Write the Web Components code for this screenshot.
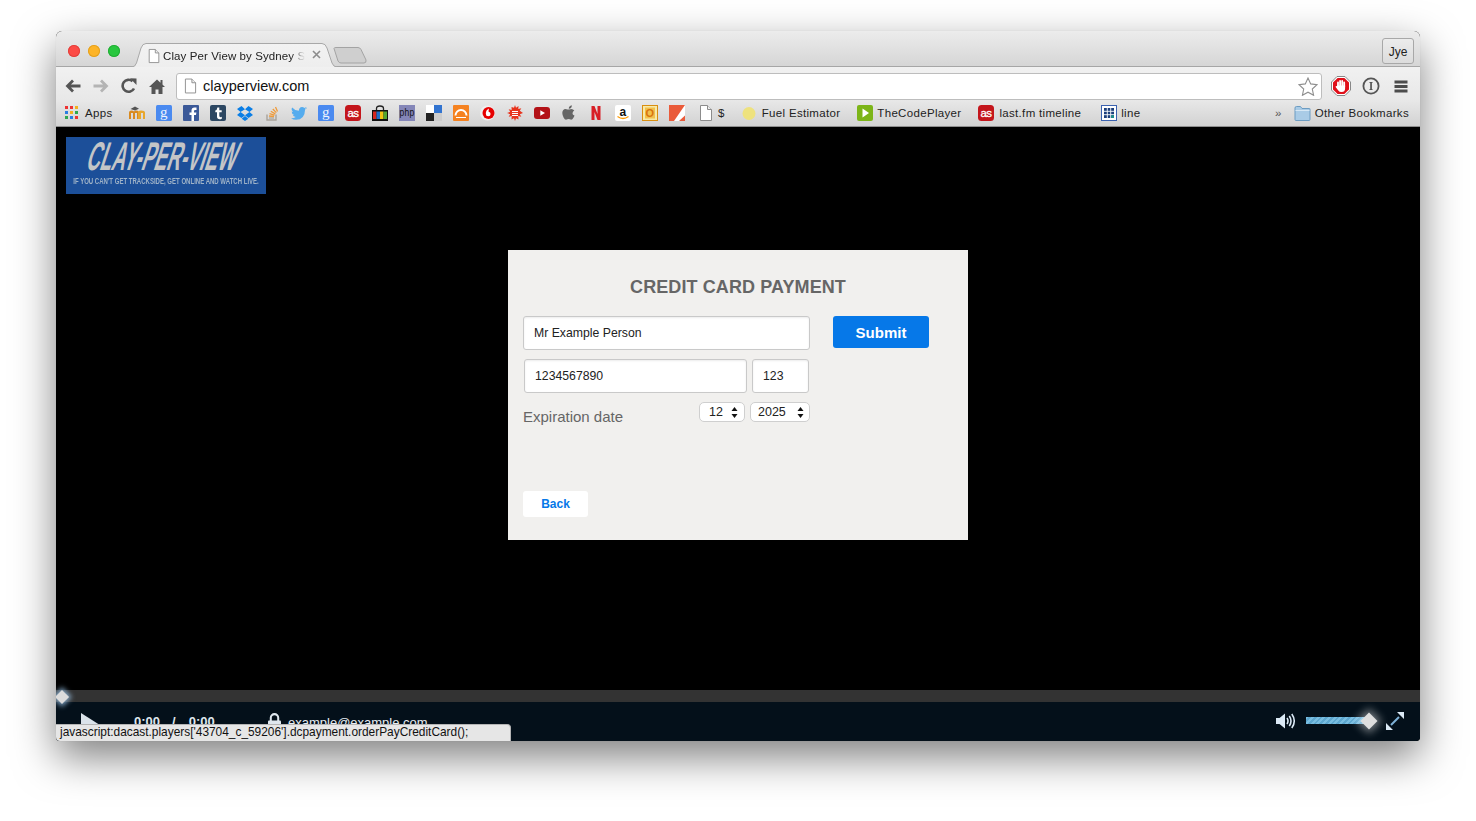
<!DOCTYPE html>
<html>
<head>
<meta charset="utf-8">
<title>Clay Per View</title>
<style>
  html, body { margin: 0; background: #fff; }
  body { width: 1476px; height: 821px; overflow: hidden; font-family: "Liberation Sans", Arial, sans-serif; }
</style>
</head>
<body>
<browser-window>
  <tab-strip></tab-strip>
  <browser-toolbar></browser-toolbar>
  <bookmarks-bar></bookmarks-bar>
  <player-stage>
    <site-logo></site-logo>
    <payment-card></payment-card>
  </player-stage>
  <player-bar></player-bar>
  <status-bubble>javascript:dacast.players['43704_c_59206'].dcpayment.orderPayCreditCard();</status-bubble>
</browser-window>

<script>
const PAGE_ICON = `<path d="M2.5 .5h7l4 4v11h-11z" fill="#fff" stroke="#8c8c8c"/><path d="M9.5 .5v4h4" fill="#eee" stroke="#8c8c8c"/>`;

// every 16x16 favicon of the bookmarks bar
const ICONS = {
  apps: `<rect x="0" y="1" width="3" height="3" fill="#e33"/><rect x="5" y="1" width="3" height="3" fill="#e33"/><rect x="10" y="1" width="3" height="3" fill="#f2b01e"/><rect x="0" y="6" width="3" height="3" fill="#2a7de1"/><rect x="5" y="6" width="3" height="3" fill="#f2b01e"/><rect x="10" y="6" width="3" height="3" fill="#2fa84f"/><rect x="0" y="11" width="3" height="3" fill="#2fa84f"/><rect x="5" y="11" width="3" height="3" fill="#2a7de1"/><rect x="10" y="11" width="3" height="3" fill="#e33"/>`,
  moodle: `<path d="M0 14V7.500Q0 5.500 2.500 5.500 4.200 5.500 5 6.500 5.800 5.500 7.500 5.500 10 5.500 10 7.500V14H8V8H6V14H4V8H2V14z" fill="#d98a1f"/><path d="M9 14V7.500Q9 5.500 12 5.500 16 5.500 16 7.500V14H14V8H12V14z" fill="#e8a72d"/><path d="M1.500 4L6 1.500 10 3.800 6 5.500z" fill="#555"/>`,
  g: `<rect width="16" height="16" rx="1.500" fill="#4a8af0"/><text x="8" y="11.500" text-anchor="middle" font-family="Liberation Serif,serif" font-size="15" fill="#fff" fill-opacity=".92">g</text>`,
  fb: `<rect width="16" height="16" rx="1" fill="#3b5998"/><path d="M11 16v-6h2l.4-2.500H11V6q0-1 1.200-1h1.300V2.600Q12.500 2.400 11.600 2.400 8.500 2.400 8.500 5.500v2H6.500V10h2v6z" fill="#fff"/>`,
  tumblr: `<rect width="16" height="16" rx="2" fill="#2c4762"/><path d="M9.300 2.500v2.700h2.400v2H9.300v3.600q0 1.400 1.200 1.400.7 0 1.300-.4v2q-.9.500-2.200.5-2.600 0-2.600-2.800V7.200H5.300V5.600Q7.100 5 7.400 2.500z" fill="#fff"/>`,
  dropbox: `<path d="M4.500 1L0 4l3.500 3L8 4.200zM11.500 1L16 4l-3.500 3L8 4.200zM0 10l4.500 3L8 10.200 3.500 7zM16 10l-4.500 3L8 10.200 12.500 7zM4.700 13.800L8 11l3.300 2.800L8 16z" fill="#0a7ee6"/>`,
  so: `<path d="M3 9.500V15h9V9.500" fill="none" stroke="#a9a39a" stroke-width="1.400"/><path d="M5 13h5" stroke="#b5aea3" stroke-width="1.300"/><path d="M5 11l5 .5M5.500 8.700l5 1.400M6.800 6.300l4.500 2.600M8.800 4l3.500 3.600M11.500 2l2 4.600" stroke="#ef9b3b" stroke-width="1.300"/>`,
  twitter: `<path d="M16 3.400q-.9.400-1.900.5 1-.6 1.400-1.800-.9.600-2.100.8-.9-1-2.400-1-2.900 0-3.200 3.900Q4 5.600 1.100 2.400-.3 5 2.100 6.800q-.8 0-1.500-.4 0 2.500 2.600 3.200-.7.200-1.500.1.700 2 3 2.300-2.200 1.600-4.700 1.300 2.300 1.500 5 1.500 8.800 0 9.100-10.300 1-.7 1.900-2.100z" fill="#55acee"/>`,
  lastfm: `<rect width="16" height="16" rx="3.500" fill="#c4161c"/><text x="8" y="11.500" text-anchor="middle" font-family="Liberation Sans,sans-serif" font-size="11.500" letter-spacing="-.5" fill="#fff" stroke="#fff" stroke-width=".3">as</text>`,
  bag: `<path d="M4.500 5V3.500q0-2.500 3.500-2.500t3.500 2.500V5" fill="none" stroke="#222" stroke-width="1.300"/><rect y="5" width="16" height="11" fill="#111"/><rect x="1" y="6.500" width="3.500" height="7.500" fill="#d7261e"/><rect x="4.500" y="6.500" width="3.500" height="7.500" fill="#1f6fc9"/><rect x="8" y="6.500" width="3.500" height="7.500" fill="#f2c313"/><rect x="11.500" y="6.500" width="3.500" height="7.500" fill="#55a630"/>`,
  php: `<rect width="16" height="16" fill="#8486b8"/><text x="8" y="11" text-anchor="middle" font-family="Liberation Sans,sans-serif" font-size="10" fill="#111" textLength="15" lengthAdjust="spacingAndGlyphs">php</text>`,
  delicious: `<rect width="8" height="8" x="8" fill="#3274d0"/><rect width="8" height="8" y="8" fill="#222"/><rect width="8" height="8" x="8" y="8" fill="#ccc"/><rect width="8" height="8" fill="#fff"/>`,
  grooveshark: `<rect width="16" height="16" rx="1" fill="#f58220"/><path d="M2.500 10.500a5.500 5.500 0 0 1 11 0" fill="none" stroke="#fff" stroke-width="2"/><path d="M3 12.500h10" stroke="#fff" stroke-width="1"/>`,
  vodafone: `<circle cx="7.500" cy="8" r="7.500" fill="#efefef"/><circle cx="8.500" cy="8" r="6" fill="#e60000"/><path d="M9 3.500Q5.800 5 5.800 8.700 5.800 11.200 8.200 11.200t2.400-2.300Q10.600 7.100 8.600 6.800 8.500 5 9 3.500z" fill="#fff"/>`,
  splat: `<path d="M8 0l1 2.800L11.500 1l-.2 3 3-.8-1.500 2.600L16 8l-3.200 1.200 1.500 2.600-3-.8.2 3.500L9 13.200 8 16l-1-2.800-2.500 1.300.2-3.500-3 .8 1.500-2.600L0 8l3.200-1.200L1.700 4.200l3 .8-.2-3L7 2.800z" fill="#e8331c"/><path d="M5 6.500h6M5 8.500h6M5 10.500h6" stroke="#fff" stroke-width="1"/>`,
  youtube: `<rect y="2" width="16" height="12" rx="3" fill="#b31217"/><path d="M6.300 5.200L11 8l-4.700 2.800z" fill="#fff"/>`,
  apple: `<path d="M11.500 8.400q0-2 1.800-3-1.100-1.500-3-1.500-1 0-2.100.5-.5.200-.8.200t-.9-.2Q5.400 3.900 4.600 3.900 1.300 4.100 1.300 8q0 2.300 1.400 4.700 1.100 2 2.300 2 .6 0 1.300-.4.600-.3 1.300-.3.700 0 1.300.3.700.4 1.200.4 1.300 0 2.500-2.200.6-1 .9-2-2-.9-2-2.100zM10 2.900Q11 1.800 10.800.3 9.300.5 8.500 1.500 7.700 2.500 7.800 3.700 9.100 3.800 10 2.900z" fill="#666"/>`,
  netflix: `<path d="M3.500 1h3l3 8V1h3v14h-3l-3-8v8h-3z" fill="#d81f26"/>`,
  amazon: `<rect width="16" height="16" rx="2" fill="#fff"/><text x="8" y="10.500" text-anchor="middle" font-family="Liberation Sans,sans-serif" font-weight="700" font-size="12" fill="#111">a</text><path d="M2.500 11.500Q8 15.500 13.500 11.500" fill="none" stroke="#f90" stroke-width="1.300"/>`,
  outlook: `<rect x=".5" y=".5" width="15" height="15" fill="#f7e9a8" stroke="#d98e10"/><rect x="3" y="2.500" width="10" height="11" fill="#f2c14b"/><text x="8" y="12" text-anchor="middle" font-family="Liberation Sans,sans-serif" font-weight="700" font-size="11" fill="#d9730d">O</text>`,
  slash: `<rect width="16" height="16" fill="#ea5b3a"/><path d="M16 0v10.500L10 16H5z" fill="#fff"/>`,
  page: PAGE_ICON,
  moon: `<circle cx="8" cy="8.500" r="6.500" fill="#eee27e"/>`,
  codeplayer: `<rect width="16" height="16" rx="2" fill="#7cb518"/><path d="M5.500 3.500L12 8l-6.500 4.500z" fill="#fff"/>`,
  grid: `<rect x=".5" y=".5" width="15" height="15" fill="#fff" stroke="#3b62b0"/><path d="M3 3h10v10H3z" fill="#1c3f7c"/><path d="M6.300 3v10M9.700 3v10M3 6.300h10M3 9.700h10" stroke="#fff" stroke-width=".9"/><rect x="10.200" y="10.200" width="2.800" height="2.800" fill="#1d8f8a"/>`,
  folder: `<path d="M.5 3q0-1.500 1.500-1.500h4L7.500 3.500H15q.5 0 .5.500v10.500q0 1-1 1h-13q-1 0-1-1z" fill="#a9cbe6" stroke="#6c9cc2"/><path d="M1 5.500h14" stroke="#d7e8f5"/>`
};

class BmIcon extends HTMLElement {
  connectedCallback() {
    this.attachShadow({ mode: "open" });
    this.shadowRoot.innerHTML = `
      <style>
        :host { display: block; width: 16px; height: 16px; flex: none; }
        svg { display: block; }
      </style>
      <svg width="16" height="16" viewBox="0 0 16 16">${ICONS[this.getAttribute("name")]}</svg>
    `;
  }
}

class BrowserWindow extends HTMLElement {
  constructor() {
    super();
    this.attachShadow({ mode: "open" });
    this.shadowRoot.innerHTML = `
      <style>
        :host {
          display: flex;
          flex-direction: column;
          position: relative;
          width: 1364px;
          height: 710px;
          margin: 31px 0 0 56px;
          border-radius: 6px 6px 4px 4px;
          background: #000;
          box-shadow: 0 16px 42px rgba(0,0,0,.5), 0 0 1px rgba(0,0,0,.15);
          overflow: hidden;
        }
      </style>
      <slot></slot>
    `;
  }
}

class TabStrip extends HTMLElement {
  constructor() {
    super();
    this.attachShadow({ mode: "open" });
    this.shadowRoot.innerHTML = `
      <style>
        :host {
          display: flex;
          align-items: flex-end;
          height: 36px;
          box-sizing: border-box;
          padding-left: 74px;
          background: linear-gradient(#ececec, #d5d5d5);
          position: relative;
        }
        .lights { position: absolute; left: 12px; top: 14px; display: flex; gap: 8px; }
        .lights i { display: block; width: 12px; height: 12px; border-radius: 50%; }
        .line { position: absolute; left: 0; right: 0; bottom: 0; height: 1px; background: #a6a6a6; }
        .tab { position: relative; width: 207px; height: 24px; flex: none; z-index: 1; }
        .tab > svg.bg { position: absolute; left: 0; top: 0; }
        .tab .file { position: absolute; left: 17px; top: 5px; }
        .tab .title {
          position: absolute; left: 33px; top: 5px; width: 142px; height: 16px;
          font-size: 11.500px; line-height: 16px; letter-spacing: .1px; color: #222;
          white-space: nowrap; overflow: hidden;
          -webkit-mask-image: linear-gradient(90deg, #000 128px, transparent 142px);
        }
        .tab .close { position: absolute; left: 182px; top: 7px; }
        .newtab { display: block; margin: 0 0 3px -4px; position: relative; z-index: 1; }
        .jye {
          position: absolute; right: 6px; top: 7px;
          width: 30px; height: 24px;
          border: 1px solid #a8a8a8; border-radius: 3px;
          background: linear-gradient(#ececec, #dcdcdc);
          font-size: 12px; line-height: 26px; text-align: center; color: #222;
        }
      </style>
      <div class="lights">
        <i style="background:#fc4b46;box-shadow:inset 0 0 0 1px #e2403c"></i>
        <i style="background:#fdb427;box-shadow:inset 0 0 0 1px #e3a01f"></i>
        <i style="background:#29c73f;box-shadow:inset 0 0 0 1px #23ad35"></i>
      </div>
      <div class="line"></div>
      <div class="tab">
        <svg class="bg" width="207" height="24" viewBox="0 0 207 24">
          <defs><linearGradient id="t" x1="0" y1="0" x2="0" y2="1"><stop offset="0" stop-color="#f2f2f2"/><stop offset="1" stop-color="#eeeeee"/></linearGradient></defs>
          <path d="M0 24H2Q5 24 6.500 20L11 5Q12.500 .5 16 .5H192Q195.500 .5 197 5L202 20Q203.500 24 207 24" fill="url(#t)" stroke="#a8a8a8"/>
        </svg>
        <svg class="file" width="14" height="16" viewBox="0 0 16 16">${PAGE_ICON}</svg>
        <div class="title">Clay Per View by Sydney S</div>
        <svg class="close" width="9" height="9" viewBox="0 0 9 9"><path d="M1 1l7 7M8 1l-7 7" stroke="#8c8c8c" stroke-width="1.600"/></svg>
      </div>
      <svg class="newtab" width="34" height="17" viewBox="0 0 34 17"><path d="M1 1.500Q1 .5 3 .5H25Q27 .5 28 2.500L33 13Q33.500 16 31 16H8Q6 16 5 14z" fill="#cfcfcf" stroke="#a3a3a3"/></svg>
      <div class="jye">Jye</div>
    `;
  }
}

class BrowserToolbar extends HTMLElement {
  constructor() {
    super();
    this.attachShadow({ mode: "open" });
    this.shadowRoot.innerHTML = `
      <style>
        :host {
          display: flex;
          align-items: center;
          height: 33px;
          box-sizing: border-box;
          padding: 5px 9px 0 9px;
          background: linear-gradient(#f1f1f1, #e8e8e8);
        }
        svg { display: block; flex: none; }
        .nav { display: flex; align-items: center; gap: 12px; width: 111px; flex: none; }
        .omni {
          display: flex; align-items: center;
          width: 1146px; height: 27px; box-sizing: border-box;
          padding: 0 3px 0 7px;
          background: #fff;
          border: 1px solid #bdbdbd; border-radius: 3px;
          font-size: 14.500px; color: #111;
        }
        .omni span { flex: 1; margin-left: 6px; }
        .tools { display: flex; align-items: center; gap: 11px; margin-left: 9px; }
      </style>
      <div class="nav">
        <svg width="16" height="14" viewBox="0 0 16 14"><path d="M15.500 7H3M8 1.500L2.500 7 8 12.500" fill="none" stroke="#555" stroke-width="2.800"/></svg>
        <svg width="16" height="14" viewBox="0 0 16 14"><path d="M.5 7H13M8 1.500L13.500 7 8 12.500" fill="none" stroke="#b4b4b4" stroke-width="2.800"/></svg>
        <svg width="16" height="16" viewBox="0 0 16 16"><path d="M13 10.500A6 6 0 1 1 11.500 3.200" fill="none" stroke="#555" stroke-width="2.600"/><path d="M9 .2L15.500 .5V7z" fill="#555"/></svg>
        <svg width="16" height="15" viewBox="0 0 16 15"><path d="M8 .5L0 8h2.500v7h4v-4.500h3V15h4V8H16l-2.500-2.400V1h-2v2.700z" fill="#555"/></svg>
      </div>
      <div class="omni">
        <svg width="13" height="16" viewBox="1 0 14 16">${PAGE_ICON}</svg>
        <span>clayperview.com</span>
        <svg width="20" height="19" viewBox="0 0 20 19"><path d="M10 1l2.700 5.900 6.300.8-4.700 4.300 1.300 6.300L10 15.200 4.400 18.300 5.700 12 1 7.700l6.300-.8z" fill="#fff" stroke="#8f8f8f" stroke-width="1.100"/></svg>
      </div>
      <div class="tools">
        <svg width="20" height="20" viewBox="0 0 20 20">
          <path d="M6 .5h8L19.500 6v8L14 19.500H6L.5 14V6z" fill="#fff" stroke="#888"/>
          <path d="M6.600 2h6.800L18 6.600v6.800L13.400 18H6.600L2 13.400V6.600z" fill="#e0101a"/>
          <path d="M7 11V6.500M9.100 10V5M11.200 10V5M13.200 11V6.500" stroke="#fff" stroke-width="1.800" stroke-linecap="round"/>
          <path d="M6.100 9.500H14.100V12.500Q14.100 16 10.500 16 8.300 16 7.300 14.500L4.800 11.300Q4.400 10.500 5 10.100 5.600 9.800 6.100 10.300z" fill="#fff"/>
        </svg>
        <svg width="18" height="18" viewBox="0 0 18 18"><circle cx="9" cy="9" r="7.600" fill="none" stroke="#555" stroke-width="1.800"/><path d="M7.500 5h3v1h-.6v6h.6v1h-3v-1h.7V6h-.7z" fill="#555"/></svg>
        <svg width="14" height="13" viewBox="0 0 14 13" style="margin-left:3px"><path d="M.5 2h13M.5 6.500h13M.5 11h13" stroke="#4c4c4c" stroke-width="2.800"/></svg>
      </div>
    `;
  }
}

class BookmarksBar extends HTMLElement {
  constructor() {
    super();
    this.attachShadow({ mode: "open" });
    const favs = ["moodle","g","fb","tumblr","dropbox","so","twitter","g","lastfm","bag","php","delicious","grooveshark","vodafone","splat","youtube","apple","netflix","amazon","outlook","slash"];
    this.shadowRoot.innerHTML = `
      <style>
        :host {
          display: flex;
          align-items: center;
          height: 27px;
          box-sizing: border-box;
          padding: 0 11px 0 9px;
          background: linear-gradient(#e8e8e8, #d2d2d2);
          border-bottom: 1px solid #8e8e8e;
          font-size: 11.500px;
          letter-spacing: .32px;
          color: #222;
          white-space: nowrap;
        }
        .apps { display: flex; align-items: center; gap: 4px; width: 64px; flex: none; }
        .favs { display: flex; gap: 11px; flex: none; }
        .item { display: flex; align-items: center; gap: 4px; flex: none; }
        .spacer { flex: 1; }
      </style>
      <div class="apps"><bm-icon name="apps"></bm-icon><span>Apps</span></div>
      <div class="favs">${favs.map(n => `<bm-icon name="${n}"></bm-icon>`).join("")}</div>
      <div class="item" style="margin-left:13px"><bm-icon name="page"></bm-icon><span>$</span></div>
      <div class="item" style="margin-left:16px;gap:5px"><bm-icon name="moon"></bm-icon><span>Fuel Estimator</span></div>
      <div class="item" style="margin-left:17px;gap:4px"><bm-icon name="codeplayer"></bm-icon><span>TheCodePlayer</span></div>
      <div class="item" style="margin-left:17px;gap:5px"><bm-icon name="lastfm"></bm-icon><span>last.fm timeline</span></div>
      <div class="item" style="margin-left:20px;gap:4px"><bm-icon name="grid"></bm-icon><span>line</span></div>
      <div class="spacer"></div>
      <div class="item" style="margin-right:13px;color:#555">»</div>
      <div class="item" style="gap:4px;margin-left:-1px"><svg width="17" height="16" viewBox="0 0 16 16" style="display:block">${ICONS.folder}</svg><span>Other Bookmarks</span></div>
    `;
  }
}

class PlayerStage extends HTMLElement {
  constructor() {
    super();
    this.attachShadow({ mode: "open" });
    this.shadowRoot.innerHTML = `
      <style>
        :host {
          display: flex;
          flex-direction: column;
          flex: 1;
          min-height: 0;
          background: #000;
          padding-top: 10px;
          box-sizing: border-box;
        }
      </style>
      <slot></slot>
    `;
  }
}

class SiteLogo extends HTMLElement {
  constructor() {
    super();
    this.attachShadow({ mode: "open" });
    this.shadowRoot.innerHTML = `
      <style>
        :host {
          display: block;
          width: 200px; height: 57px;
          margin-left: 10px;
          background: #1c4f99;
          font-family: "Liberation Sans", Arial, sans-serif;
          color: #c3c5c7;
          text-align: center;
        }
        .name {
          font-size: 40px; line-height: 36px; height: 36px; font-weight: 700;
          white-space: nowrap;
          transform: skewX(-18deg) scaleX(.475);
          margin: 0 -100px 0 -104px;
          padding-top: 1px;
        }
        .tag {
          font-size: 9px; line-height: 10px; font-weight: 700; color: #9fb3c8;
          white-space: nowrap;
          transform: scaleX(.67);
          margin: 2px -60px 0;
        }
      </style>
      <div class="name">CLAY-PER-VIEW</div>
      <div class="tag">IF YOU CAN'T GET TRACKSIDE, GET ONLINE AND WATCH LIVE.</div>
    `;
  }
}

class PaymentCard extends HTMLElement {
  constructor() {
    super();
    this.attachShadow({ mode: "open" });
    this.shadowRoot.innerHTML = `
      <style>
        :host {
          display: flex;
          flex-direction: column;
          align-self: center;
          width: 460px; height: 290px;
          box-sizing: border-box;
          margin-top: 56px;
          padding: 26px 15px 0;
          background: #f1f0ee;
          font-family: "Liberation Sans", Arial, sans-serif;
          color: #111;
        }
        h1 {
          margin: 0 0 18px; font-size: 18px; line-height: 22px; font-weight: 700;
          letter-spacing: .1px;
          text-align: center; color: #666;
        }
        .top { display: flex; align-items: flex-start; gap: 23px; }
        .field {
          box-sizing: border-box; height: 34px;
          padding-left: 10px;
          background: #fff;
          border: 1px solid #c9c9c9; border-radius: 3px;
          box-shadow: inset 0 1px 2px rgba(0,0,0,.08);
          font-size: 12.250px; line-height: 33px; color: #222;
        }
        .submit {
          width: 96px; height: 32px; background: #0678e8; border-radius: 3px;
          color: #fff; font-size: 15px; font-weight: 700; line-height: 33px; text-align: center;
        }
        .row2 { display: flex; gap: 5px; margin: 9px 0 0 1px; width: 285px; }
        .expiry { display: flex; width: 287px; margin-top: 9px; align-items: flex-start; }
        .expiry label { flex: 1; font-size: 15px; line-height: 18px; color: #666; margin-top: 6px; }
        .sel {
          display: flex; align-items: center; box-sizing: border-box; height: 20px;
          padding: 0 6px 0 9px;
          background: #fff; border: 1px solid #cfcfcf; border-radius: 5px;
          font-size: 12.500px; color: #222;
        }
        .sel span { flex: 1; }
        .sel + .sel { margin-left: 5px; padding: 0 5px 0 7px; }
        .back {
          width: 65px; height: 26px; margin-top: 65px; background: #fff; border-radius: 3px;
          color: #0678e8; font-size: 12px; font-weight: 700; line-height: 26px; text-align: center;
        }
      </style>
      <h1>CREDIT CARD PAYMENT</h1>
      <div class="top">
        <div class="field" style="width:287px">Mr Example Person</div>
        <div class="submit">Submit</div>
      </div>
      <div class="row2">
        <div class="field" style="width:223px">1234567890</div>
        <div class="field" style="width:57px">123</div>
      </div>
      <div class="expiry">
        <label>Expiration date</label>
        <div class="sel" style="width:46px"><span>12</span>${this.arrows()}</div>
        <div class="sel" style="width:60px"><span>2025</span>${this.arrows()}</div>
      </div>
      <div class="back">Back</div>
    `;
  }
  arrows() {
    return `<svg width="7" height="11" viewBox="0 0 7 11"><path d="M3.500 0L6.500 4H.5zM3.500 11L.5 7h6z" fill="#111"/></svg>`;
  }
}

class PlayerBar extends HTMLElement {
  constructor() {
    super();
    this.attachShadow({ mode: "open" });
    this.shadowRoot.innerHTML = `
      <style>
        :host {
          display: block; flex: none; position: relative;
          height: 51px;
          background: #04101a;
          font-family: "Liberation Sans", Arial, sans-serif;
          color: #dfe7ee;
        }
        .seek { height: 12px; background: #333; }
        .knob {
          position: absolute; left: 1px; top: 2px; width: 10px; height: 10px;
          background: #dcdcdc; transform: rotate(45deg);
          box-shadow: 0 0 5px 2px rgba(170,215,255,.7);
        }
        .row { display: flex; align-items: flex-start; height: 39px; overflow: hidden; padding-left: 25px; }
        .play { margin-top: 11px; flex: none; }
        .time { display: flex; margin: 12px 0 0 31px; font-size: 13px; line-height: 16px; font-weight: 700; width: 82px; flex: none; white-space: nowrap; }
        .time span:nth-child(2) { margin-left: 12px; }
        .time span:nth-child(3) { margin-left: 13px; }
        .lock { margin: 10px 0 0 52px; flex: none; }
        .mail { margin: 12px 0 0 7px; font-size: 13px; line-height: 18px; color: #e6ecf1; }
        .spacer { flex: 1; }
        .vol { display: flex; align-items: center; height: 39px; padding-right: 16px; margin-top: -1px; }
        .bar {
          width: 60px; height: 7px; margin: 0 0 0 10px;
          background: repeating-linear-gradient(135deg, #79bde0 0 2px, #5da7cf 2px 4px);
        }
        .dia {
          width: 12px; height: 12px; margin: 0 11px 0 -3px; background: #dedede;
          transform: rotate(45deg);
          box-shadow: 0 0 8px 3px rgba(255,255,255,.45);
        }
      </style>
      <div class="seek"></div>
      <div class="knob"></div>
      <div class="row">
        <svg class="play" width="22" height="28" viewBox="0 0 22 28"><path d="M0 0L22 14 0 28z" fill="#dbe3ea"/></svg>
        <div class="time"><span>0:00</span><span>/</span><span>0:00</span></div>
        <svg class="lock" width="13" height="20" viewBox="0 0 14 20"><path d="M3 9V5.500a4 4 0 0 1 8 0V9" fill="none" stroke="#dfe7ee" stroke-width="2.200"/><rect y="8.500" width="14" height="11" rx="1" fill="#dfe7ee"/></svg>
        <div class="mail">example@example.com</div>
        <div class="spacer"></div>
        <div class="vol">
          <svg width="20" height="18" viewBox="0 0 20 18"><path d="M0 6h3.500L9 1.500v15L3.500 12H0z" fill="#dbe9f5"/><path d="M11 6q2 3 0 6M13.300 4q3.400 5 0 10M15.800 2q5 7 0 14" fill="none" stroke="#dbe9f5" stroke-width="1.600"/></svg>
          <div class="bar"></div>
          <div class="dia"></div>
          <svg width="18" height="18" viewBox="0 0 18 18"><path d="M11 0H18V7zM0 11V18H7z" fill="#dbe9f5"/><path d="M5 13L13 5" stroke="#7fb2d8" stroke-width="2"/></svg>
        </div>
      </div>
    `;
  }
}

class StatusBubble extends HTMLElement {
  constructor() {
    super();
    this.attachShadow({ mode: "open" });
    this.shadowRoot.innerHTML = `
      <style>
        :host {
          position: absolute; left: 0; bottom: 0;
          width: 455px; height: 17px;
          box-sizing: border-box;
          padding-left: 4px;
          background: #e6e6e6;
          border: 1px solid #b4b4b4; border-width: 1px 1px 0 0;
          border-radius: 0 4px 0 0;
          font-size: 11.900px; line-height: 14px; color: #111;
          white-space: nowrap;
        }
      </style>
      <slot></slot>
    `;
  }
}

customElements.define("bm-icon", BmIcon);
customElements.define("browser-window", BrowserWindow);
customElements.define("tab-strip", TabStrip);
customElements.define("browser-toolbar", BrowserToolbar);
customElements.define("bookmarks-bar", BookmarksBar);
customElements.define("player-stage", PlayerStage);
customElements.define("site-logo", SiteLogo);
customElements.define("payment-card", PaymentCard);
customElements.define("player-bar", PlayerBar);
customElements.define("status-bubble", StatusBubble);
</script>
</body>
</html>
